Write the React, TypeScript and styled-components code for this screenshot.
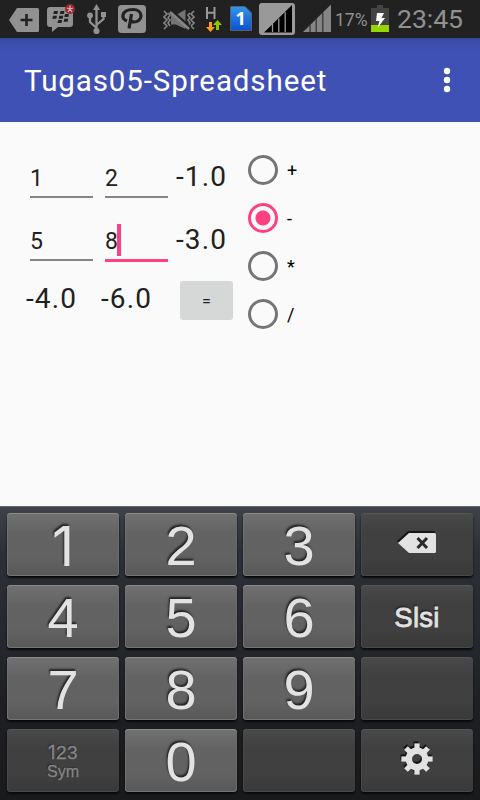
import React, { useState } from "react";
import styled, { createGlobalStyle, css } from "styled-components";

const GlobalStyle = createGlobalStyle`
  * { box-sizing: border-box; }
  body { margin: 0; background: #fafafa; }
`;

const Screen = styled.div`
  width: 480px;
  height: 800px;
  display: flex;
  flex-direction: column;
  overflow: hidden;
  background: #fafafa;
  color: #212121;
  font-family: Roboto, "Noto Sans", sans-serif;
`;

const StatusBar = styled.header`
  height: 38px;
  flex: none;
  display: flex;
  align-items: flex-start;
  background: #212121;
  color: #919191;
`;

const StatusIcon = styled.svg<{ $gap: number }>`
  display: block;
  flex: none;
  height: 38px;
  margin-left: ${(p) => p.$gap}px;
`;

const BatteryLevel = styled.span`
  width: 36px;
  margin-left: 4px;
  font-size: 17.5px;
  line-height: 20px;
  padding-top: 10px;
  white-space: nowrap;
`;

const Clock = styled.time`
  margin-left: 8px;
  padding-top: 4px;
  font-size: 26.5px;
  line-height: 30px;
`;

const AppBar = styled.div`
  height: 84px;
  flex: none;
  display: flex;
  align-items: center;
  justify-content: space-between;
  padding: 0 24px;
  color: #fff;
  background: linear-gradient(#35459b 0, #3c4da8 3px, #3f51b5 14px);
`;

const Title = styled.h1`
  margin: 0;
  padding-top: 2px;
  font-size: 29.5px;
  font-weight: 400;
  line-height: 36px;
  letter-spacing: 0.9px;
  white-space: nowrap;
`;

const OverflowButton = styled.button`
  width: 18px;
  height: 36px;
  padding: 0;
  border: 0;
  background: none;
  color: inherit;
`;

const Content = styled.main`
  height: 384px;
  flex: none;
  display: flex;
  padding: 24px 24px 0;
`;

const Sheet = styled.div`
  width: 224px;
  display: grid;
  grid-template-columns: 75px 75px 60px;
  grid-template-rows: 63px 63px 60px;
`;

const InputCell = styled.div<{ $active?: boolean }>`
  width: 63px;
  height: ${(p) => (p.$active ? 53 : 52)}px;
  margin-left: 6px;
  padding-top: 18px;
  display: flex;
  border-bottom: ${(p) => (p.$active ? "3px solid #ff4081" : "2px solid #858585")};
  font-size: 23px;
  line-height: 30px;
`;

const Caret = styled.i`
  width: 4px;
  height: 32px;
  margin: -3px 0 0 -1px;
  background: #ff4081;
`;

const Result = styled.output<{ $last?: boolean }>`
  display: flex;
  padding-left: 2px;
  padding-top: ${(p) => (p.$last ? 11 : 15)}px;
  font-size: 28px;
  line-height: 32px;
  letter-spacing: 1.1px;
`;

const EqualsButton = styled.button`
  width: 53px;
  height: 39px;
  margin: 9px 0 0 6px;
  padding: 2px 0 0;
  border: 0;
  border-radius: 3px;
  background: #d6d8d7;
  color: #212121;
  font: 400 16px Roboto, sans-serif;
`;

const Operators = styled.div`
  display: flex;
  flex-direction: column;
`;

const Operator = styled.label`
  height: 48px;
  display: flex;
  align-items: center;
  gap: 9px;
  color: #000;
  font-size: 18px;
  line-height: 24px;
`;

const OperatorSymbol = styled.span`
  padding-top: 2px;
`;

const Radio = styled.input`
  appearance: none;
  width: 30px;
  height: 30px;
  margin: 0;
  border: 3px solid #757575;
  border-radius: 50%;
  &:checked {
    border-color: #ff4081;
    background: radial-gradient(circle, #ff4081 7px, transparent 8px);
  }
`;

const Keyboard = styled.section`
  flex: 1;
  display: grid;
  grid-template-columns: repeat(4, 112px);
  grid-auto-rows: 63px;
  gap: 9px 6px;
  padding: 6px 7px 0;
  border-top: 1px solid #62676a;
  background: linear-gradient(#3d4348 0, #2c3137 45px, #25282e 130px, #1d1f23 200px, #191a1b 294px);
  font-family: "Liberation Sans", Arial, sans-serif;
`;

const darkKey = css`
  background: linear-gradient(#4a4a4a, #404040 30%, #404040 70%, #393939);
  box-shadow: inset 0 1px #555, inset 1px 0 #484848, inset 0 -1px #484848, 0 2px 2px #08090a;
`;

const numberKey = css`
  background: linear-gradient(#717171, #636363 32%, #626262 70%, #585858);
  box-shadow: inset 0 1px #8a8a8a, inset 1px 0 #707070, inset -1px 0 #6a6a6a, inset 0 -1px #757575, 0 2px 2px #08090a;
`;

const Key = styled.button<{ $kind?: "dark" | "word" | "mode" }>`
  height: 63px;
  display: flex;
  flex-direction: column;
  align-items: center;
  justify-content: center;
  padding: 3px 0 0;
  border: 0;
  border-radius: 4px;
  color: #e2e2e2;
  font: 56px/56px "Liberation Sans", Arial, sans-serif;
  text-shadow: -1px -2px 2px #222;
  ${(p) => (p.$kind ? darkKey : numberKey)}
  ${(p) =>
    p.$kind === "word" &&
    css`
      font-size: 27.5px;
      line-height: 32px;
      letter-spacing: 0.3px;
      -webkit-text-stroke: 0.8px #e2e2e2;
    `}
  ${(p) =>
    p.$kind === "mode" &&
    css`
      padding-top: 1px;
      color: #858585;
      font-size: 19px;
      line-height: 20px;
      text-shadow: -1px -1px 1px #2a2a2a;
      -webkit-text-stroke: 0.3px #858585;
    `}
`;

/* The numeral one is set without a foot serif. */
const PlainOne = styled.span`
  font-family: Inter, sans-serif;
  font-size: 0.97em;
`;

const ModeDigits = styled.span`
  letter-spacing: 0.4px;
`;

const ModeCaption = styled.span`
  font-size: 16px;
  line-height: 17px;
`;

const KeyIcon = styled.svg`
  display: block;
  margin-top: -6px;
  filter: drop-shadow(-1px -2px 0.5px #151515);
`;

const statusGrey = "#919191";

function StatusIcons() {
  return (
    <>
      <StatusIcon $gap={9} width="30" viewBox="9 0 30 38">
        <path d="M9 20 17 8H37.5Q39 8 39 9.500V30.500Q39 32 37.500 32H17Z" fill={statusGrey} />
        <path d="M26.500 14V26M20.500 20H32.500" stroke="#212121" strokeWidth="2.600" />
      </StatusIcon>
      <StatusIcon $gap={8} width="28" viewBox="47 0 28 38">
        <path d="M50 7H70Q73 7 73 10V24Q73 27 70 27H58L52 32V27H50Q47 27 47 24V10Q47 7 50 7Z" fill={statusGrey} />
        <path
          d="M54 11h4l-.7 3h-4zM60.500 11h4l-.7 3h-4zM53 15.800h4l-.7 3h-4zM59.300 15.800h4l-.7 3h-4zM65 14h4l-.7 3h-4zM58.200 20h4l-.7 3h-4zM64.300 18.700h4l-.7 3h-4z"
          fill="#212121"
        />
        <circle cx="70" cy="9" r="5" fill="#982831" />
        <path d="M70 5.500V9M70 9 66.800 8M70 9 73.200 8M70 9 68 12M70 9 72 12" stroke="#d2aaad" strokeWidth="1.300" />
      </StatusIcon>
      <StatusIcon $gap={12} width="19" viewBox="87 0 19 38">
        <g stroke={statusGrey} fill="none" strokeWidth="2.300">
          <path d="M96.500 8V31M96.500 28 90 22V16M96.500 25 103.500 19V14" />
        </g>
        <path d="M96.500 4 100 10H93ZM101 12h5v5h-5z" fill={statusGrey} />
        <circle cx="90" cy="15.500" r="2.900" fill={statusGrey} />
        <circle cx="96.500" cy="31" r="3.100" fill={statusGrey} />
      </StatusIcon>
      <StatusIcon $gap={12} width="28" viewBox="118 0 28 38">
        <rect x="118" y="5" width="28" height="28" rx="3.500" fill={statusGrey} />
        <path
          d="M127 21Q122 19 123 15C124 11 128 9.500 133 9.500C138 9.500 141 12.500 141 16C141 20 137 22 134 22Q132 22 131 20.500M131.500 14L129 28.500"
          fill="none"
          stroke="#212121"
          strokeWidth="3.200"
        />
      </StatusIcon>
      <StatusIcon $gap={17} width="32" viewBox="163 0 32 38">
        <g fill="none" stroke="#858585" strokeWidth="1.600">
          <path d="M164 11l3 3-3 3 3 3-3 3 3 3-3 3M168 13l2 2-2 3 2 2-2 3 2 3M194 11l-3 3 3 3-3 3 3 3-3 3 3 3M190 13l-2 2 2 3-2 2 2 3-2 3" />
        </g>
        <path d="M171 15H176L185.500 9.500V29L176 24.500H171Z" fill="#737373" />
        <path d="M171.500 10.500 190.500 27.500" stroke="#212121" strokeWidth="2.500" />
        <path d="M170 12 189 29" stroke="#858585" strokeWidth="2.400" />
      </StatusIcon>
      <StatusIcon $gap={10} width="17" viewBox="205 0 17 38">
        <path d="M207 7V19M214.500 7V19M207 12.700H214.500" fill="none" stroke="#999" strokeWidth="2" />
        <path d="M209 22H212V27H215L210.500 32 206 27H209Z" fill="#ff9b22" />
        <path d="M216 30H219V25H222L217.500 20 213 25H216Z" fill="#8bc800" />
      </StatusIcon>
      <StatusIcon $gap={8} width="22" viewBox="230 0 22 38">
        <defs>
          <linearGradient id="sim" x2="0" y2="1">
            <stop stopColor="#3296ed" />
            <stop offset="1" stopColor="#0b50d2" />
          </linearGradient>
        </defs>
        <path d="M231 6.500H245L251.500 13V30.500H230.500V7Z" fill="url(#sim)" stroke="#54606c" />
        <text x="235.500" y="25" fill="#fff" fontFamily="Noto Sans, sans-serif" fontWeight="700" fontSize="18">1</text>
      </StatusIcon>
      <StatusIcon $gap={7} width="36" viewBox="259 0 36 38">
        <rect x="259" y="3" width="36" height="32" rx="3" fill="#999" />
        <path d="M264 32.500 292 5V32.500Z" fill="#000" />
        <path d="M272.500 24V32M278.800 18.500V32M285.200 12V32" stroke="#999" strokeWidth="1.300" />
      </StatusIcon>
      <StatusIcon $gap={8} width="28" viewBox="303 0 28 38">
        <path d="M303 32 331 4.500V32Z" fill="#858585" />
        <path d="M310 25V32M316.200 18.500V32M322.800 12.500V32" stroke="#303030" strokeWidth="1.200" />
      </StatusIcon>
    </>
  );
}

function Battery() {
  return (
    <StatusIcon $gap={0} width="18" viewBox="371 0 18 38">
      <path d="M377 5H383V8H389V32H371V8H377Z" fill="#444" />
      <path d="M371 25H389V32H371Z" fill="#95d500" />
      <path d="M377 13H384L381.500 18H385L377.500 28 379.500 21H376Z" fill="#fff" />
    </StatusIcon>
  );
}

function Backspace() {
  return (
    <KeyIcon width="38" height="20" viewBox="0 0 38 20">
      <path d="M0 10 11 0H36.500Q38 0 38 1.500V18.500Q38 20 36.500 20H11Z" fill="#e2e2e2" />
      <path d="M19.500 5 29 15M29 5 19.500 15" stroke="#292929" strokeWidth="3" />
    </KeyIcon>
  );
}

const teeth = [0, 45, 90, 135, 180, 225, 270, 315];

function Gear() {
  return (
    <KeyIcon width="32" height="32" viewBox="-16 -16 32 32">
      <circle r="8.200" fill="none" stroke="#e2e2e2" strokeWidth="6.400" />
      {teeth.map((angle) => (
        <path key={angle} d="M-2.600-9V-15.600H2.600V-9Z" transform={`rotate(${angle})`} fill="#e2e2e2" />
      ))}
    </KeyIcon>
  );
}

export default function App() {
  const [operator, setOperator] = useState("-");
  return (
    <Screen>
      <GlobalStyle />
      <StatusBar>
        <StatusIcons />
        <BatteryLevel>17%</BatteryLevel>
        <Battery />
        <Clock>23:45</Clock>
      </StatusBar>
      <AppBar>
        <Title>Tugas05-Spreadsheet</Title>
        <OverflowButton aria-label="More options">
          <svg width="18" height="36" viewBox="0 0 18 36" fill="currentColor">
            <circle cx="9" cy="9" r="3.200" />
            <circle cx="9" cy="18" r="3.200" />
            <circle cx="9" cy="27" r="3.200" />
          </svg>
        </OverflowButton>
      </AppBar>
      <Content>
        <Sheet>
          <InputCell>1</InputCell>
          <InputCell>2</InputCell>
          <Result>-1.0</Result>
          <InputCell>5</InputCell>
          <InputCell $active>
            8<Caret />
          </InputCell>
          <Result>-3.0</Result>
          <Result $last>-4.0</Result>
          <Result $last>-6.0</Result>
          <EqualsButton>=</EqualsButton>
        </Sheet>
        <Operators>
          {["+", "-", "*", "/"].map((symbol) => (
            <Operator key={symbol}>
              <Radio type="radio" name="operator" checked={operator === symbol} onChange={() => setOperator(symbol)} />
              <OperatorSymbol>{symbol}</OperatorSymbol>
            </Operator>
          ))}
        </Operators>
      </Content>
      <Keyboard>
        <Key>
          <PlainOne>1</PlainOne>
        </Key>
        <Key>2</Key>
        <Key>3</Key>
        <Key $kind="dark" aria-label="Backspace">
          <Backspace />
        </Key>
        <Key>4</Key>
        <Key>5</Key>
        <Key>6</Key>
        <Key $kind="word">Slsi</Key>
        <Key>7</Key>
        <Key>8</Key>
        <Key>9</Key>
        <Key $kind="dark" />
        <Key $kind="mode">
          <ModeDigits>
            <PlainOne>1</PlainOne>23
          </ModeDigits>
          <ModeCaption>Sym</ModeCaption>
        </Key>
        <Key>0</Key>
        <Key $kind="dark" />
        <Key $kind="dark" aria-label="Settings">
          <Gear />
        </Key>
      </Keyboard>
    </Screen>
  );
}
